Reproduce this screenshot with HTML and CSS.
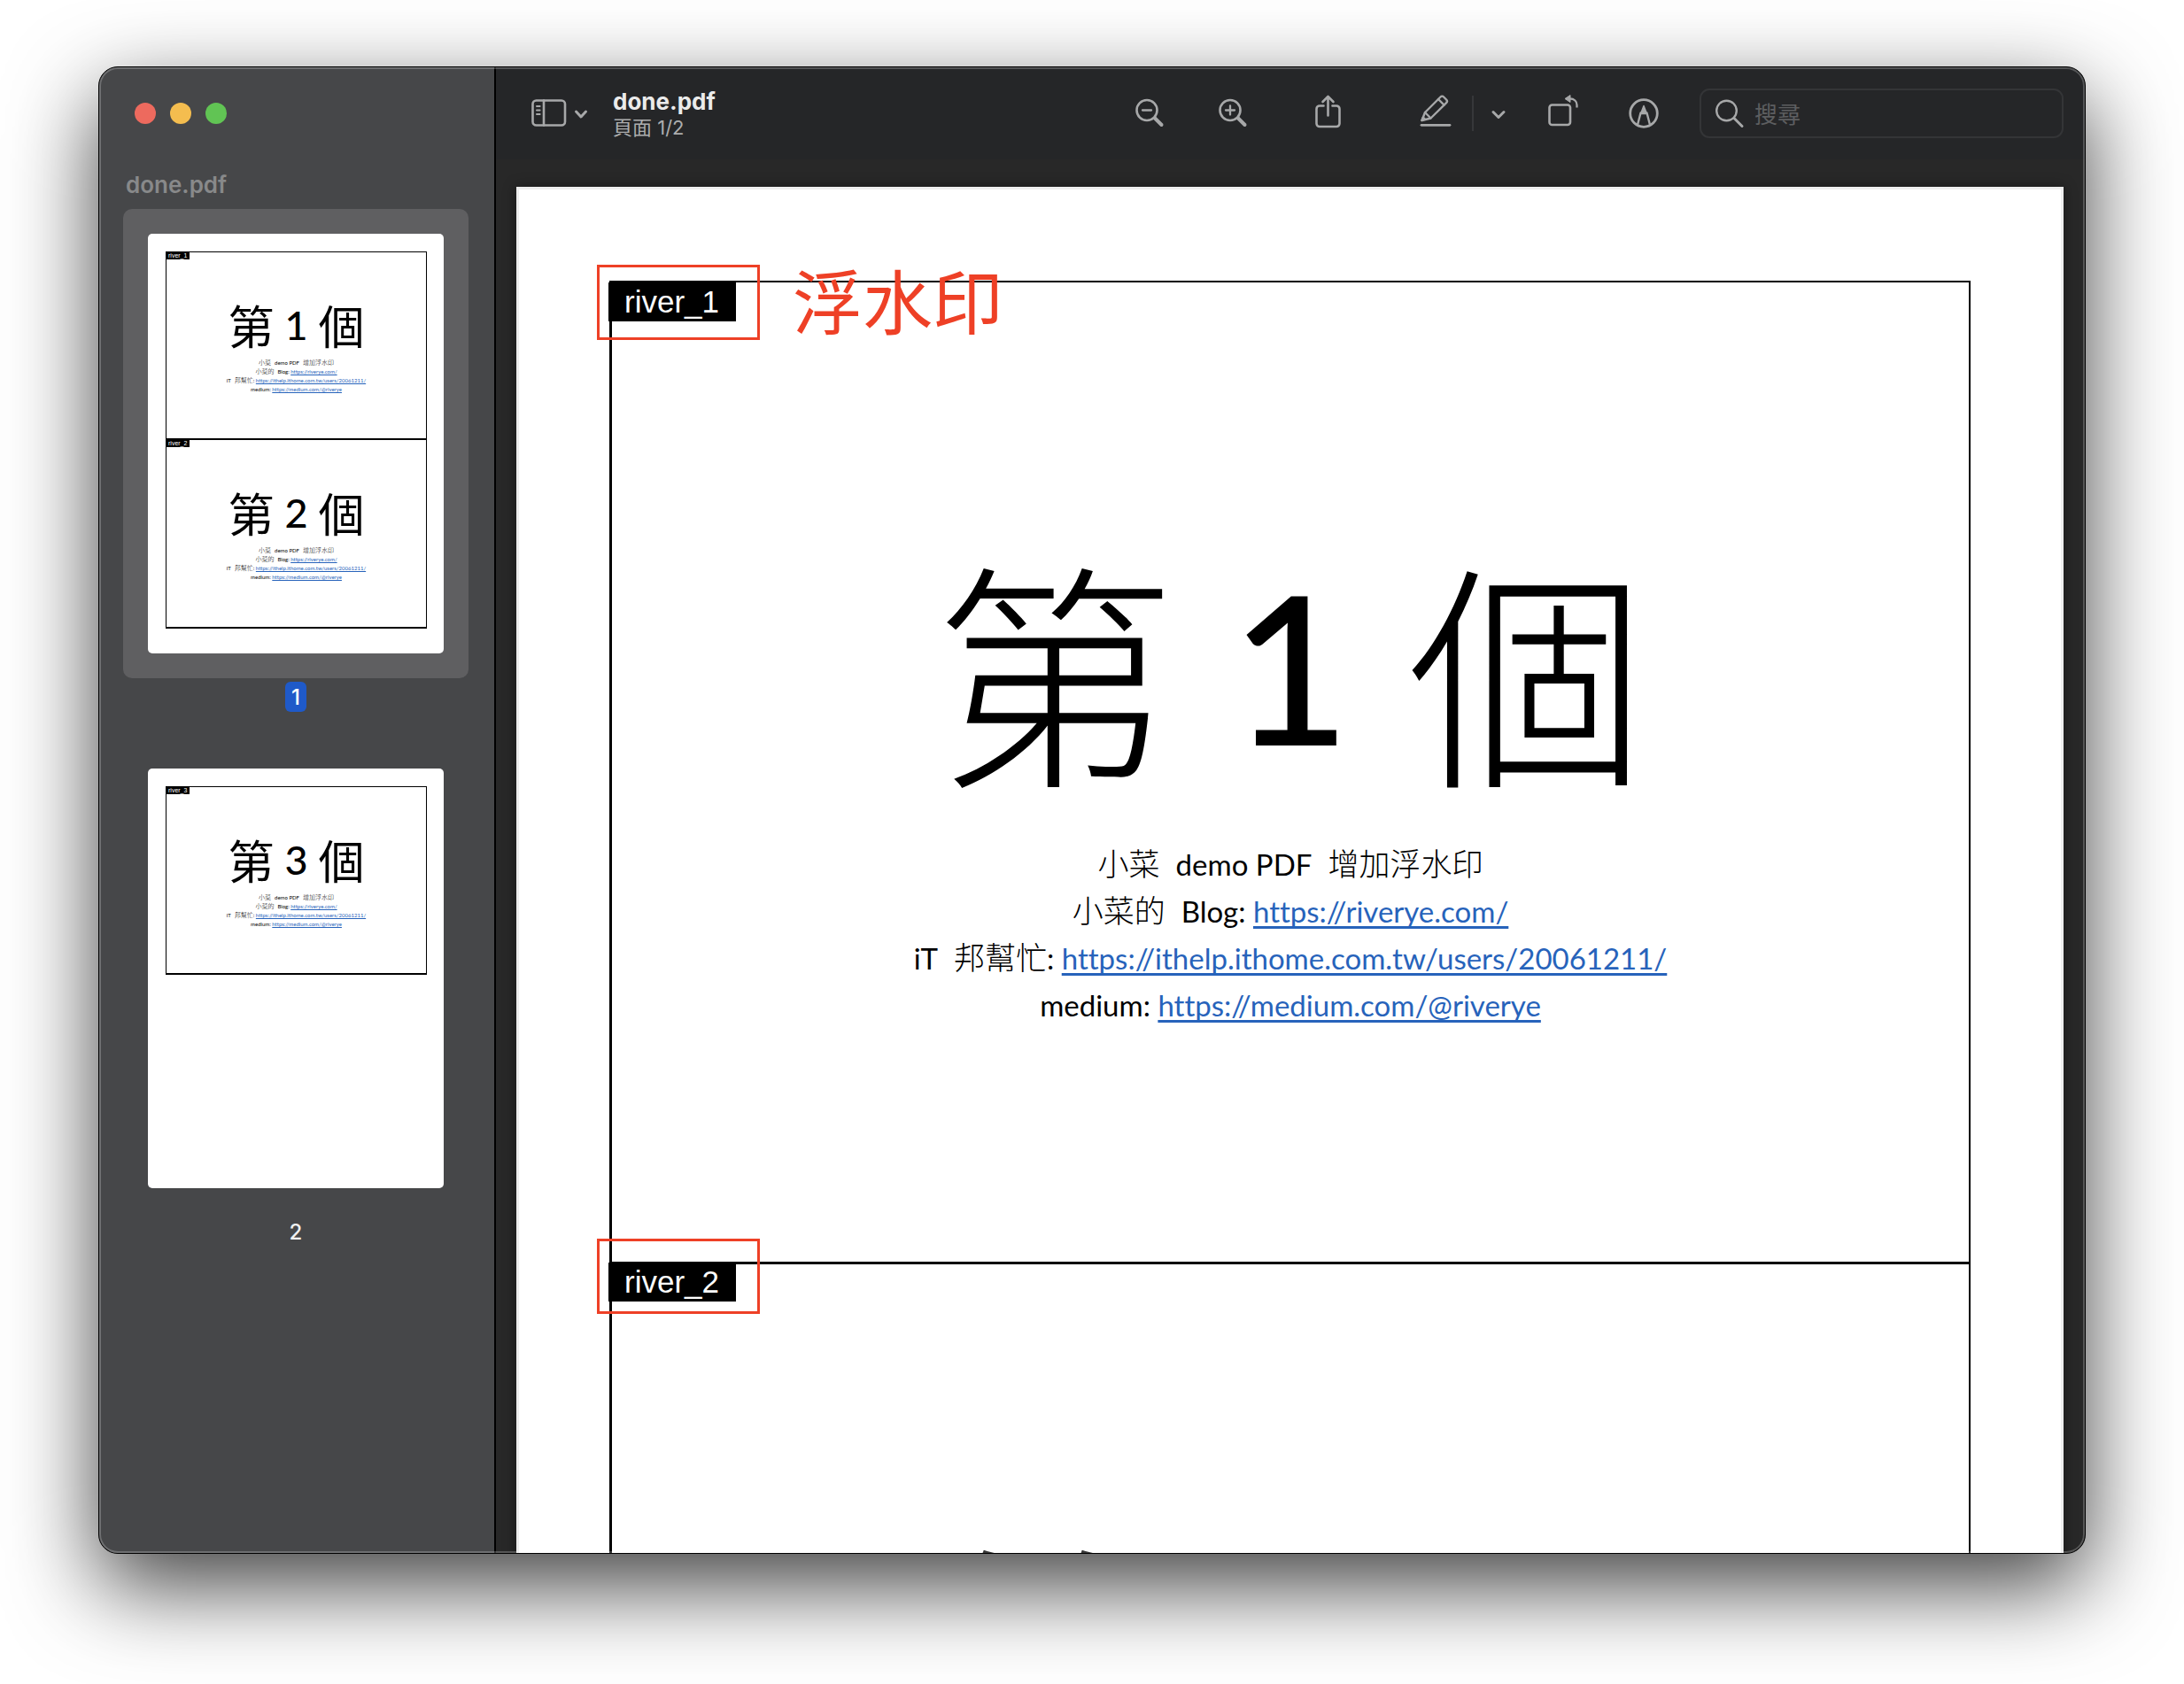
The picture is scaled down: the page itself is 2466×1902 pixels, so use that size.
FILE: index.html
```html
<!DOCTYPE html>
<html lang="zh-Hant">
<head>
<meta charset="utf-8">
<meta name="viewport" content="width=device-width, initial-scale=1">
<title>done.pdf</title>
<link rel="stylesheet" href="styles.css">
</head>
<body>
<div class="window">
  <aside class="sidebar">
    <div class="lights">
      <button class="light red" aria-label="關閉"></button>
      <button class="light yellow" aria-label="縮到最小"></button>
      <button class="light green" aria-label="縮放"></button>
    </div>
    <h2 class="file-label">done.pdf</h2>
    <ol class="thumbs">
      <li class="thumb-item">
        <div class="thumb-back selected">
          <div class="sheet thumb">
            <section class="slide">
              <span class="mark">river_1</span>
              <h3 class="heading"><span>第</span> <span class="digit">1</span> <span>個</span></h3>
              <p class="line"><span class="cjk">小菜</span><span>demo PDF</span><span class="cjk">增加浮水印</span></p>
              <p class="line"><span class="cjk">小菜的</span><span>Blog: <a href="https://riverye.com/">https://riverye.com/</a></span></p>
              <p class="line"><span>iT</span><span><span class="cjk">邦幫忙</span>: <a href="https://ithelp.ithome.com.tw/users/20061211/">https://ithelp.ithome.com.tw/users/20061211/</a></span></p>
              <p class="line"><span>medium: <a href="https://medium.com/@riverye">https://medium.com/@riverye</a></span></p>
            </section>
            <section class="slide">
              <span class="mark">river_2</span>
              <h3 class="heading"><span>第</span> <span class="digit">2</span> <span>個</span></h3>
              <p class="line"><span class="cjk">小菜</span><span>demo PDF</span><span class="cjk">增加浮水印</span></p>
              <p class="line"><span class="cjk">小菜的</span><span>Blog: <a href="https://riverye.com/">https://riverye.com/</a></span></p>
              <p class="line"><span>iT</span><span><span class="cjk">邦幫忙</span>: <a href="https://ithelp.ithome.com.tw/users/20061211/">https://ithelp.ithome.com.tw/users/20061211/</a></span></p>
              <p class="line"><span>medium: <a href="https://medium.com/@riverye">https://medium.com/@riverye</a></span></p>
            </section>
          </div>
        </div>
        <span class="number current">1</span>
      </li>
      <li class="thumb-item">
        <div class="thumb-back">
          <div class="sheet thumb">
            <section class="slide">
              <span class="mark">river_3</span>
              <h3 class="heading"><span>第</span> <span class="digit">3</span> <span>個</span></h3>
              <p class="line"><span class="cjk">小菜</span><span>demo PDF</span><span class="cjk">增加浮水印</span></p>
              <p class="line"><span class="cjk">小菜的</span><span>Blog: <a href="https://riverye.com/">https://riverye.com/</a></span></p>
              <p class="line"><span>iT</span><span><span class="cjk">邦幫忙</span>: <a href="https://ithelp.ithome.com.tw/users/20061211/">https://ithelp.ithome.com.tw/users/20061211/</a></span></p>
              <p class="line"><span>medium: <a href="https://medium.com/@riverye">https://medium.com/@riverye</a></span></p>
            </section>
          </div>
        </div>
        <span class="number">2</span>
      </li>
    </ol>
  </aside>

  <main class="main">
    <header class="toolbar">
      <button class="tool" aria-label="側邊欄">
        <svg width="64" height="40" viewBox="0 0 64 40" fill="none" stroke="currentColor" stroke-width="2.6" stroke-linecap="round" stroke-linejoin="round">
          <rect x="1.5" y="5.500" width="36.5" height="28" rx="4"/>
          <path d="M14 5.500v28"/>
          <path d="M6 12h3.6M6 16.500h3.6M6 21h3.600" stroke-width="2"/>
          <path d="M50.500 18l5.500 6 5.500-6" stroke-width="3"/>
        </svg>
      </button>
      <div class="title">
        <h1 class="name">done.pdf</h1>
        <p class="pages">頁面 1/2</p>
      </div>
      <button class="tool" aria-label="縮小">
        <svg width="32" height="40" viewBox="0 0 32 40" fill="none" stroke="currentColor" stroke-width="2.600" stroke-linecap="round">
          <circle cx="13" cy="16.500" r="11.500"/><path d="M8 16.500h10" stroke-width="2.300"/><path d="M22 25.500l7.500 7.500" stroke-width="4"/>
        </svg>
      </button>
      <button class="tool zoom-in" aria-label="放大">
        <svg width="32" height="40" viewBox="0 0 32 40" fill="none" stroke="currentColor" stroke-width="2.600" stroke-linecap="round">
          <circle cx="13" cy="16.500" r="11.500"/><path d="M8 16.500h10M13 11.500v10" stroke-width="2.300"/><path d="M22 25.500l7.500 7.500" stroke-width="4"/>
        </svg>
      </button>
      <button class="tool share" aria-label="分享">
        <svg width="32" height="40" viewBox="0 0 32 40" fill="none" stroke="currentColor" stroke-width="2.600" stroke-linecap="round" stroke-linejoin="round">
          <path d="M10.500 11.500H6A3.500 3.500 0 0 0 2.500 15v16.500A3.500 3.500 0 0 0 6 35h19a3.500 3.500 0 0 0 3.500-3.500V15a3.500 3.500 0 0 0-3.500-3.500h-4.500"/>
          <path d="M15.500 22.500V1M9.500 7l6-6 6 6"/>
        </svg>
      </button>
      <button class="tool pen" aria-label="醒目標示">
        <svg width="36" height="40" viewBox="0 0 36 40" fill="none" stroke="currentColor" stroke-width="2.400" stroke-linecap="round" stroke-linejoin="round">
          <path d="M3.500 28l3.500-9L24.500 1.500c1-1 2.600-1 3.600 0l3 3c1 1 1 2.600 0 3.600L13.500 25.500z"/>
          <path d="M7 19l6.500 6.500M22 4l6.600 6.600"/><path d="M3.500 28l1.300-3.300 2 2z" fill="currentColor"/>
          <path d="M3 33.300h32" stroke-width="2.800"/>
        </svg>
      </button>
      <span class="divider"></span>
      <button class="tool more" aria-label="醒目標示選項">
        <svg width="16" height="40" viewBox="0 0 16 40" fill="none" stroke="currentColor" stroke-width="3" stroke-linecap="round" stroke-linejoin="round">
          <path d="M2 18.500l6 6 6-6"/>
        </svg>
      </button>
      <button class="tool rotate" aria-label="旋轉">
        <svg width="34" height="40" viewBox="0 0 34 40" fill="none" stroke="currentColor" stroke-width="2.600" stroke-linejoin="round">
          <rect x="1.500" y="10.500" width="23.500" height="22.500" rx="3"/>
          <path d="M32.500 13.500V10.500c0-4-3-7-8-7" stroke-width="2.300"/>
          <path d="M25-.5v8L19 3.500z" fill="currentColor" stroke-width="1"/>
        </svg>
      </button>
      <button class="tool markup" aria-label="標示">
        <svg width="36" height="40" viewBox="0 0 36 40" fill="none" stroke="currentColor" stroke-width="2.400" stroke-linejoin="round">
          <circle cx="18" cy="20" r="15.300" stroke-width="2.800"/>
          <path d="M11 33l3.500-13.500h7L25 33"/>
          <path d="M14.500 20.500L18 11.500l3.500 9z" fill="currentColor" stroke-width="1.500"/>
        </svg>
      </button>
      <label class="search">
        <svg width="32" height="34" viewBox="0 0 32 34" fill="none" stroke="currentColor" stroke-width="2.400" stroke-linecap="round">
          <circle cx="12.500" cy="14" r="11.300"/><path d="M21 22.500l9 9" stroke-width="3"/>
        </svg>
        <input type="search" placeholder="搜尋" aria-label="搜尋">
      </label>
    </header>

    <div class="viewer">
      <article class="sheet full">
        <section class="slide">
          <span class="mark">river_1</span>
          <h2 class="heading"><span>第</span> <span class="digit">1</span> <span>個</span></h2>
          <p class="line"><span class="cjk">小菜</span><span>demo PDF</span><span class="cjk">增加浮水印</span></p>
          <p class="line"><span class="cjk">小菜的</span><span>Blog: <a href="https://riverye.com/">https://riverye.com/</a></span></p>
          <p class="line"><span>iT</span><span><span class="cjk">邦幫忙</span>: <a href="https://ithelp.ithome.com.tw/users/20061211/">https://ithelp.ithome.com.tw/users/20061211/</a></span></p>
          <p class="line"><span>medium: <a href="https://medium.com/@riverye">https://medium.com/@riverye</a></span></p>
        </section>
        <section class="slide">
          <span class="mark">river_2</span>
          <h2 class="heading"><span>第</span> <span class="digit">2</span> <span>個</span></h2>
        </section>
        <div class="note first"></div>
        <p class="note-text">浮水印</p>
        <div class="note second"></div>
      </article>
    </div>
  </main>
</div>
</body>
</html>
```

FILE: styles.css
```css
* { box-sizing: border-box; }

body {
  margin: 0;
  height: 100vh;
  padding: 75px 111px 147px;
  background: #fff;
  font-family: Inter, "Noto Sans CJK TC", sans-serif;
  overflow: hidden;
}

h1, h2, h3, p, ol { margin: 0; padding: 0; font-weight: 400; }
ol { list-style: none; }
button { padding: 0; border: 0; background: none; color: inherit; }
svg { display: block; overflow: visible; }

.window {
  position: relative;
  display: grid;
  grid-template-columns: 448px 1fr;
  height: 100%;
  border: 1px solid #000;
  border-radius: 22px;
  overflow: hidden;
  background: #282828;
  box-shadow: 0 36px 100px rgba(0, 0, 0, .75);
}

/* light rim just inside the window edge */
.window::after {
  content: "";
  position: absolute;
  inset: 0;
  border-radius: 21px;
  box-shadow: inset 0 0 0 2px rgba(255, 255, 255, .22);
  pointer-events: none;
}

/* sidebar */
.sidebar {
  min-height: 0;
  overflow: hidden;
  padding: 0 29px 0 27px;
  background: #464749;
  border-right: 2px solid #000;
}
.lights { display: flex; align-items: center; gap: 16px; height: 104px; padding-left: 13px; }
.light { width: 24px; height: 24px; border-radius: 50%; }
.red { background: #ed6a5e; }
.yellow { background: #f4bd4f; }
.green { background: #61c454; }
.file-label {
  margin: 13px 3px 11px;
  font-size: 26px;
  line-height: 32px;
  font-weight: 600;
  color: #88898a;
}
.thumb-item { display: flex; flex-direction: column; align-items: center; margin-bottom: 36px; }
.thumb-back { align-self: stretch; padding: 28px; border-radius: 10px; }
.selected { background: #5f5f61; }
.number {
  margin-top: 4px;
  min-width: 24px;
  padding-top: 2px;
  border-radius: 6px;
  font-size: 24px;
  line-height: 32px;
  font-weight: 500;
  text-align: center;
  color: #f0f0f0;
}
.current { background: #1f5ac9; color: #fff; }

/* toolbar */
.main { display: flex; flex-direction: column; min-width: 0; min-height: 0; }
.toolbar {
  flex: none;
  display: flex;
  align-items: center;
  height: 104px;
  padding: 0 24px 0 40px;
  background: #252628;
  color: #a7a8a9;
}
.title { flex: 1; margin-left: 28px; padding-top: 2px; }
.name { font-size: 26px; line-height: 30px; font-weight: 700; color: #ebebeb; }
.pages { font-size: 22px; line-height: 28px; color: #acadae; }
.zoom-in { margin-left: 62px; }
.share { margin-left: 76px; }
.pen { margin-left: 86px; }
.divider { width: 2px; height: 40px; margin: 0 20px 0 24px; background: #36373a; }
.rotate { margin-left: 48px; }
.markup { margin: 0 45px 0 56px; }
.search {
  display: flex;
  align-items: center;
  gap: 12px;
  width: 411px;
  height: 56px;
  padding: 0 16px;
  border: 2px solid #343537;
  border-radius: 11px;
}
.search svg { flex: none; }
.search input {
  flex: 1;
  min-width: 0;
  padding: 4px 0 0;
  border: 0;
  outline: 0;
  background: none;
  color: #ebebeb;
  font: 26px/36px Inter, "Noto Sans CJK TC", sans-serif;
}
.search input::placeholder { color: #5d5e60; opacity: 1; }

/* document */
.viewer { flex: 1; min-height: 0; overflow: hidden; padding: 31px 24px 0 23px; }
.sheet {
  position: relative;
  background: #fff;
  color: #000;
  font-family: Lato, "Noto Sans CJK TC", sans-serif;
  font-variant-ligatures: none;
}
.slide { position: relative; border: solid #000; }
.mark {
  position: absolute;
  background: #000;
  color: #fff;
  font-family: "Liberation Sans", Arial, sans-serif;
  white-space: nowrap;
}
.heading {
  display: flex;
  justify-content: center;
  align-items: center;
  font-family: "Noto Sans CJK TC", sans-serif;
  font-weight: 300;
}
.digit { font-family: Lato, sans-serif; font-weight: 500; }
.line { display: flex; justify-content: center; align-items: baseline; white-space: nowrap; }
.cjk { font-family: "Noto Sans CJK TC", sans-serif; font-weight: 300; line-height: 1; }
.line a { color: #2763bb; }

.full { padding: 106px 105px; box-shadow: inset 0 0 0 3px #eee, 0 0 14px rgba(0, 0, 0, .4); }
.full .slide { height: 1108px; padding-top: 298px; border-width: 2px 2px 0 3px; }
.full .slide + .slide { border-width: 3px 2px 2px 3px; }
.full .mark { top: 0; left: -4px; padding: 0 19px 0 18px; font-size: 35px; line-height: 44px; }
.full .slide + .slide .mark { top: -2px; }
.full .heading { gap: 64px; margin-bottom: 63px; font-size: 270px; line-height: 270px; }
.full .digit { font-size: 234px; }
.full .line { gap: 18px; font-size: 33px; line-height: 53px; }
.full .cjk { font-size: 35px; }
.full a { text-decoration-thickness: 3px; text-underline-offset: 4px; text-decoration-skip-ink: none; }

.thumb { height: 474px; padding: 20px 19px 20px 20px; border-radius: 5px; }
.thumb .slide { height: 213px; padding-top: 56px; border-width: 1px 1px 2px; }
.thumb .slide + .slide { border-top-width: 0; }
.thumb .mark { top: 0; left: -1px; padding: 0 3px; font-size: 7px; line-height: 8px; }
.thumb .heading { gap: 12px; margin-bottom: 12px; font-size: 52px; line-height: 52px; font-weight: 400; }
.thumb .digit { font-size: 45px; font-weight: 500; }
.thumb .line { gap: 4px; font-size: 6px; line-height: 10px; }
.thumb .cjk { font-size: 7px; }
.thumb a { text-decoration-thickness: 1px; text-decoration-skip-ink: none; }

/* hand-drawn annotations over the page */
.note { position: absolute; left: 91px; width: 184px; height: 85px; border: 3px solid #ee4026; }
.first { top: 88px; }
.second { top: 1188px; }
.note-text {
  position: absolute;
  top: 75px;
  left: 312px;
  color: #ee4026;
  font-family: "Noto Sans CJK TC", sans-serif;
  font-size: 79px;
  line-height: 104px;
}
```
